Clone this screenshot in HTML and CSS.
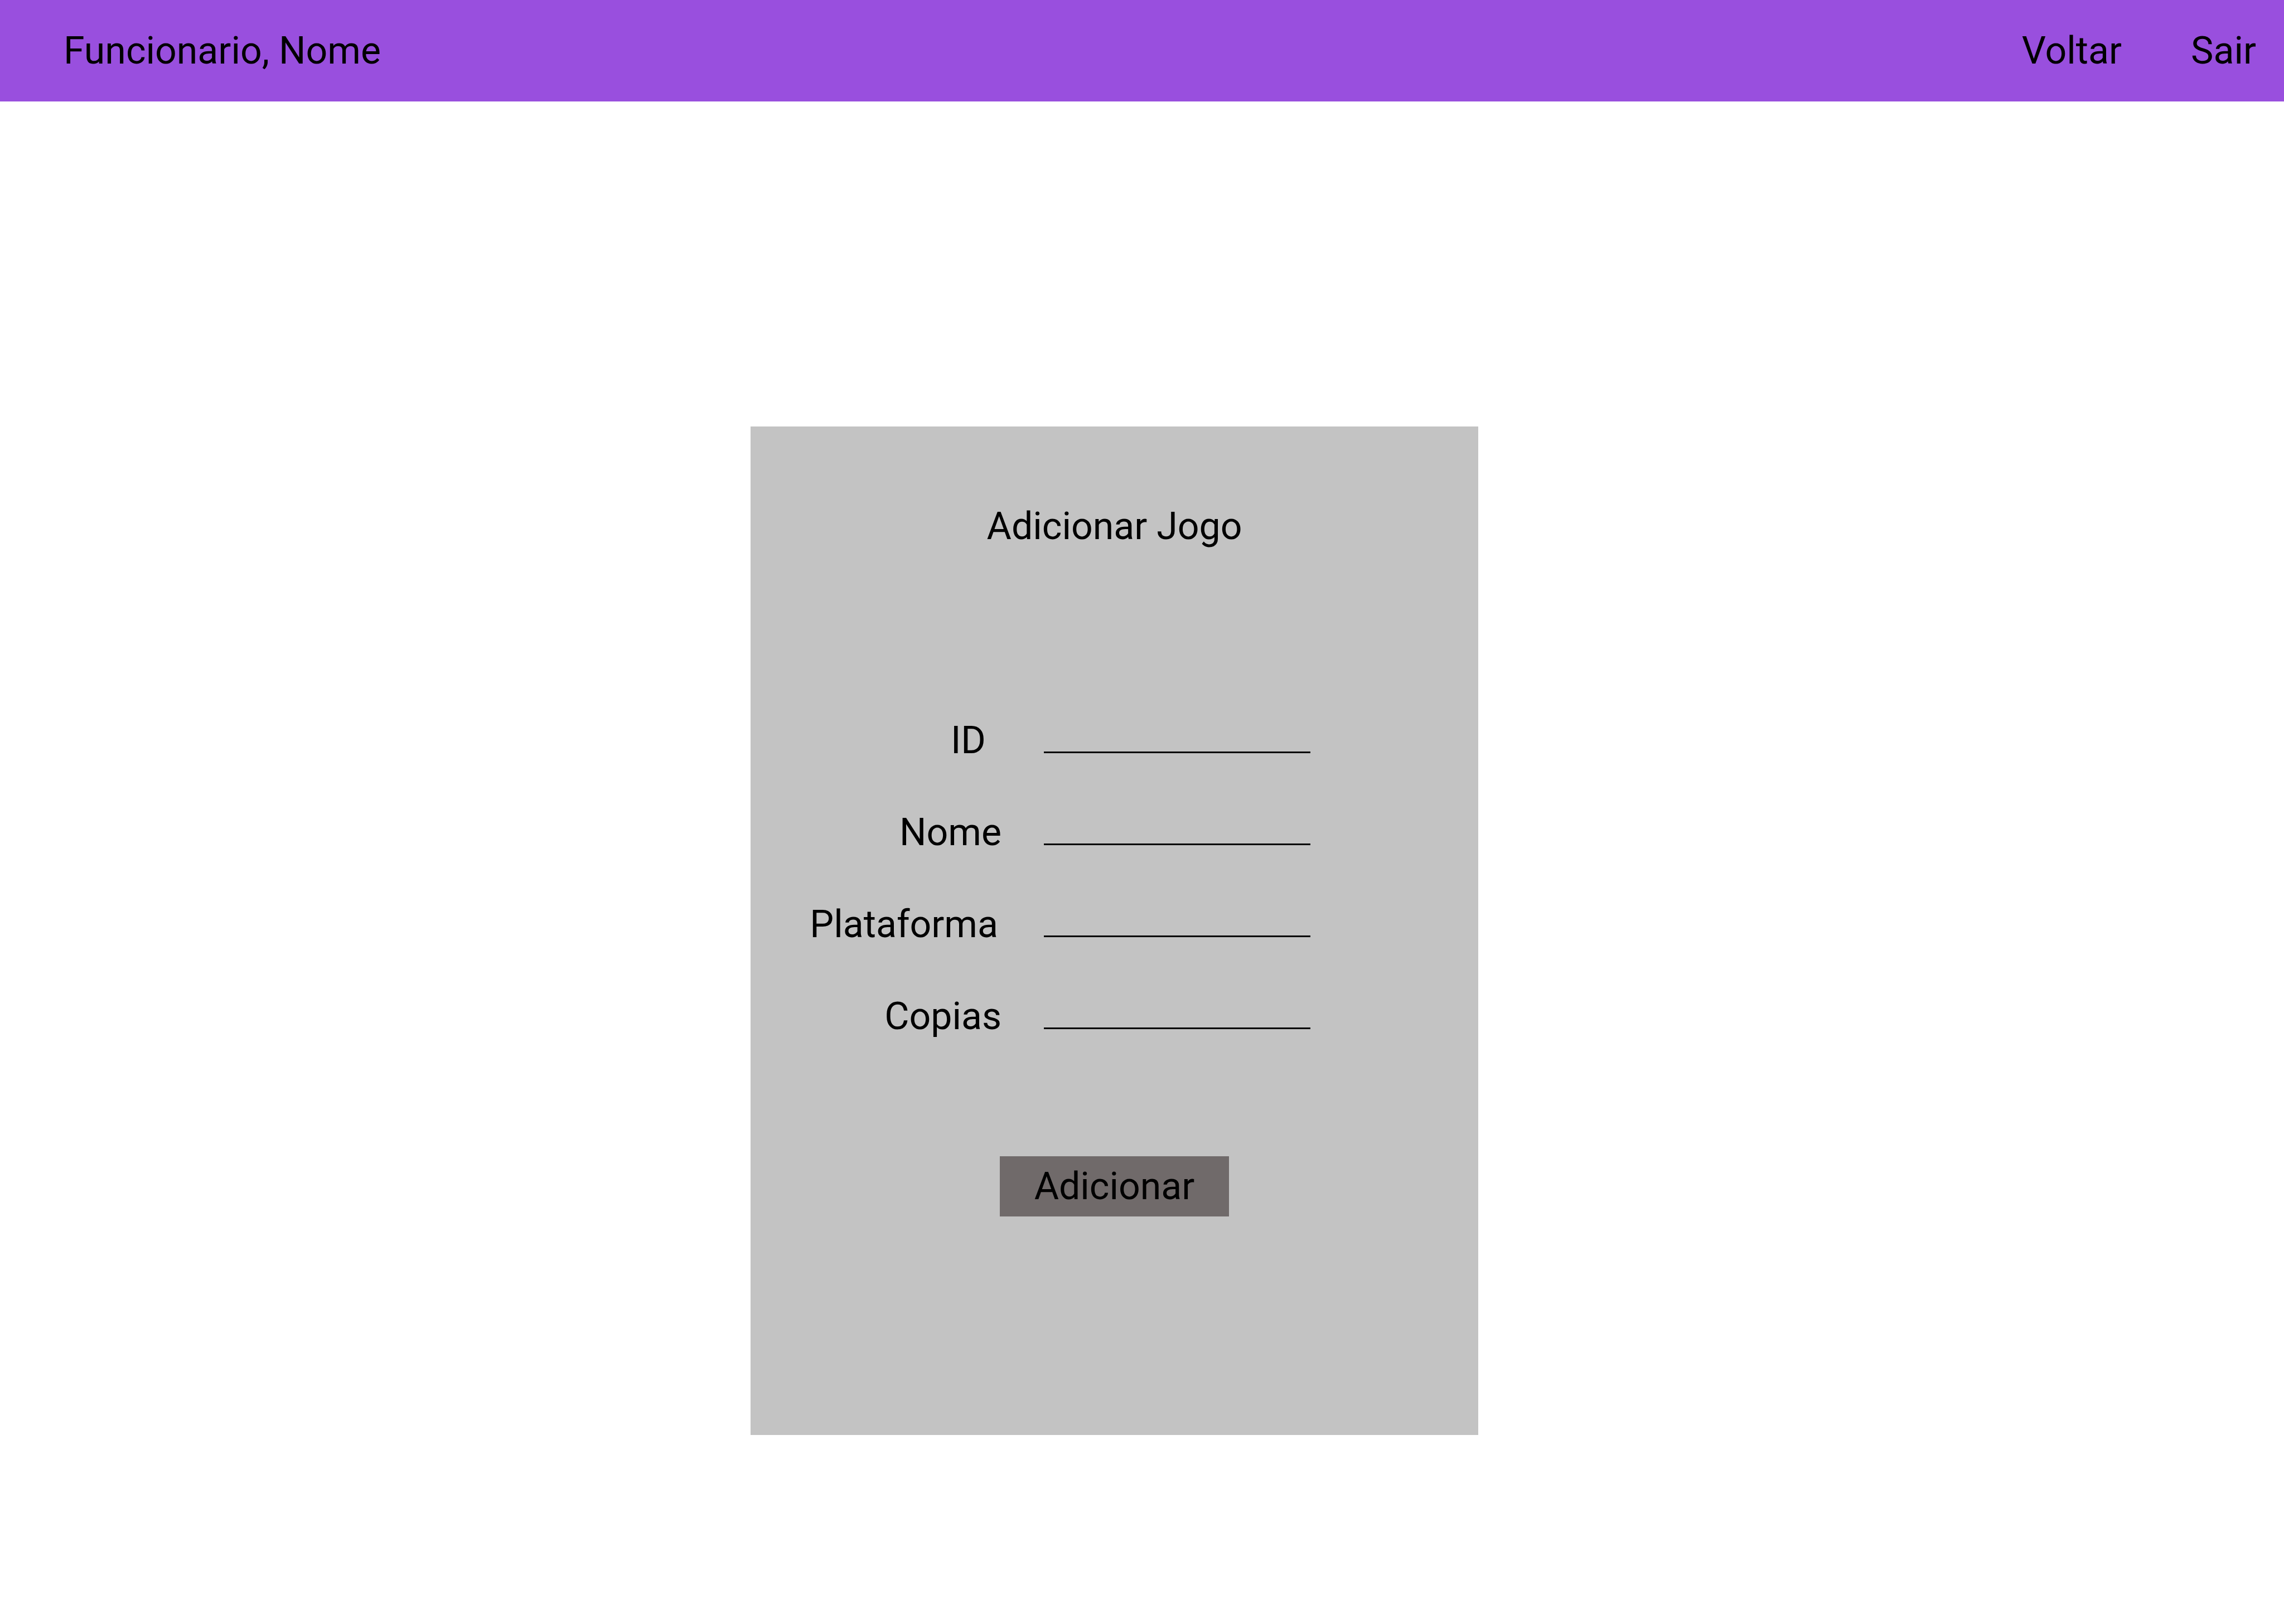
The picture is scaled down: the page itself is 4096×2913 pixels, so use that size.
FILE: index.html
```html
<!DOCTYPE html>
<html lang="pt-BR">
<head>
<meta charset="utf-8">
<meta name="viewport" content="width=device-width, initial-scale=1">
<title>Adicionar Jogo</title>
<link rel="stylesheet" href="styles.css">
</head>
<body>
<header class="topbar">
  <span class="user">Funcionario, Nome</span>
  <nav class="nav">
    <a class="nav-link" href="#voltar">Voltar</a>
    <a class="nav-link" href="#sair">Sair</a>
  </nav>
</header>
<main class="page">
  <form class="card">
    <h1 class="title">Adicionar Jogo</h1>
    <div class="fields">
      <label class="label label-id" for="id">ID</label>
      <input class="input" id="id" type="text">
      <label class="label" for="nome">Nome</label>
      <input class="input" id="nome" type="text">
      <label class="label label-plataforma" for="plataforma">Plataforma</label>
      <input class="input" id="plataforma" type="text">
      <label class="label" for="copias">Copias</label>
      <input class="input" id="copias" type="text">
    </div>
    <button class="submit" type="button">Adicionar</button>
  </form>
</main>
</body>
</html>
```

FILE: styles.css
```css
* {
  box-sizing: border-box;
}

body {
  margin: 0;
  background: #fff;
  color: #000;
  font-family: Roboto, sans-serif;
  font-size: 68px;
  line-height: 80px;
}

.topbar {
  display: flex;
  align-items: center;
  justify-content: space-between;
  padding: 51px 50px 51px 114px;
  background: #994fde;
}

.nav {
  display: flex;
  gap: 124px;
}

.nav-link {
  color: inherit;
  text-decoration: none;
}

.page {
  display: flex;
  justify-content: center;
  padding: 583px 99px 339px 0;
}

.card {
  display: flex;
  flex-direction: column;
  align-items: center;
  width: 1305px;
  padding: 139px 0 392px;
  background: #c3c3c3;
}

.title {
  margin: 0;
  font-size: inherit;
  font-weight: 400;
}

.fields {
  display: grid;
  grid-template-columns: 344px 478px;
  grid-auto-rows: 80px;
  gap: 85px 76px;
  align-self: flex-start;
  margin: 304px 0 211px 106px;
}

.label {
  text-align: right;
}

.label-id {
  padding-right: 28px;
}

.label-plataforma {
  padding-right: 6px;
}

.input {
  width: 100%;
  height: 63px;
  padding: 0;
  border: 0;
  border-bottom: 3px solid #000;
  border-radius: 0;
  background: transparent;
  color: inherit;
  font: inherit;
  outline: none;
}

.submit {
  padding: 14px 62px;
  border: 0;
  border-radius: 0;
  background: #706a6a;
  color: inherit;
  font: inherit;
}
```
